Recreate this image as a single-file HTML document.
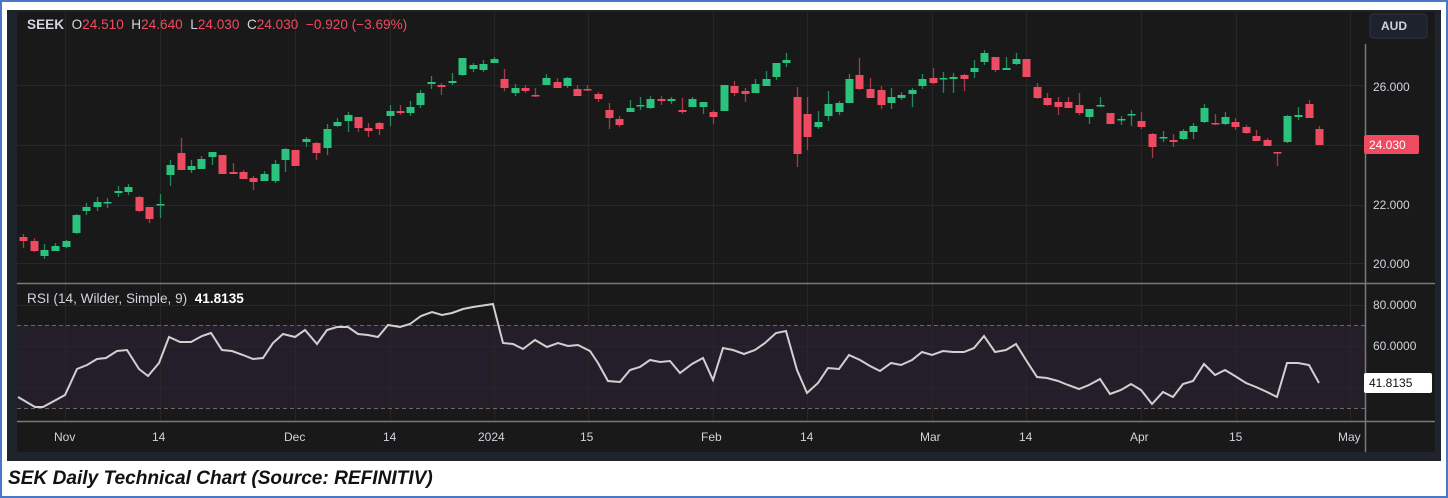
<!DOCTYPE html>
<html><head><meta charset="utf-8"><style>
*{margin:0;padding:0;box-sizing:border-box}
body{width:1448px;height:498px;background:#fff;position:relative;overflow:hidden;font-family:"Liberation Sans",sans-serif}
.border{position:absolute;left:0;top:0;width:1448px;height:498px;border:2px solid #4a78c8}
.frame{position:absolute;left:7px;top:10px;width:1434px;height:451px;background:#1f232c}
.t{position:absolute;font-size:12px;color:#d1d4dc;white-space:nowrap}
.h{font-size:13.6px}
.r{color:#f04a60}
.cap{position:absolute;left:8px;top:468px;font-size:19.1px;font-weight:bold;font-style:italic;color:#111;white-space:nowrap}
</style></head><body>
<div class="border"></div>
<div class="frame"></div>
<svg id="s" style="position:absolute;left:0;top:0" width="1448" height="498" xmlns="http://www.w3.org/2000/svg">
<rect x="17" y="12" width="1418" height="440" fill="#191919"/>
<rect x="17" y="325" width="1348" height="83" fill="#241e2b"/>
<g stroke="#272727" stroke-width="1">
<line x1="17" y1="85.5" x2="1365" y2="85.5"/><line x1="17" y1="145.5" x2="1365" y2="145.5"/>
<line x1="17" y1="205.5" x2="1365" y2="205.5"/><line x1="17" y1="263.5" x2="1365" y2="263.5"/>
<line x1="17" y1="305.5" x2="1365" y2="305.5"/><line x1="17" y1="346.5" x2="1365" y2="346.5"/><line x1="17" y1="388.5" x2="1365" y2="388.5"/>
<line x1="65.5" y1="12" x2="65.5" y2="421"/><line x1="160.5" y1="12" x2="160.5" y2="421"/><line x1="295.5" y1="12" x2="295.5" y2="421"/><line x1="390.5" y1="12" x2="390.5" y2="421"/><line x1="494.5" y1="12" x2="494.5" y2="421"/><line x1="588.5" y1="12" x2="588.5" y2="421"/><line x1="713.5" y1="12" x2="713.5" y2="421"/><line x1="807.5" y1="12" x2="807.5" y2="421"/><line x1="932.5" y1="12" x2="932.5" y2="421"/><line x1="1026.5" y1="12" x2="1026.5" y2="421"/><line x1="1141.5" y1="12" x2="1141.5" y2="421"/><line x1="1236.5" y1="12" x2="1236.5" y2="421"/><line x1="1350.5" y1="12" x2="1350.5" y2="421"/>
</g>
<g stroke="#6a6a6a" stroke-dasharray="4,3"><line x1="17" y1="325.5" x2="1365" y2="325.5"/><line x1="17" y1="408.5" x2="1365" y2="408.5"/></g>
<g stroke="#7a7a7a" stroke-width="1.5"><line x1="17" y1="283.5" x2="1435" y2="283.5"/><line x1="17" y1="421.5" x2="1435" y2="421.5"/><line x1="1365.5" y1="44" x2="1365.5" y2="452"/></g>
<g id="c"></g>
<polyline id="rsi" fill="none" stroke="#d0d0d0" stroke-width="2" points=""/>
<rect x="1370" y="14" width="57" height="24" rx="3" fill="#1e222d" stroke="#2d3240"/>
<rect x="1364" y="135" width="55" height="19" rx="2" fill="#f04a60"/>
<rect x="1364" y="373" width="68" height="20" rx="2" fill="#fff"/>
</svg>
<div class="t h" style="left:27px;top:17px"><b>SEEK</b>&nbsp; O<span class="r">24.510</span>&nbsp; H<span class="r">24.640</span>&nbsp; L<span class="r">24.030</span>&nbsp; C<span class="r">24.030</span>&nbsp; <span class="r">−0.920 (−3.69%)</span></div>
<div class="t" style="left:1381px;top:19px;font-weight:bold">AUD</div>
<div class="t" style="left:1373px;top:80px">26.000</div>
<div class="t" style="left:1369px;top:138px;color:#fff">24.030</div>
<div class="t" style="left:1373px;top:198px">22.000</div>
<div class="t" style="left:1373px;top:257px">20.000</div>
<div class="t" style="left:1373px;top:298px">80.0000</div>
<div class="t" style="left:1373px;top:339px">60.0000</div>
<div class="t" style="left:1369px;top:376px;color:#111">41.8135</div>
<div class="t h" style="left:27px;top:291px">RSI (14, Wilder, Simple, 9)&nbsp; <b style="color:#fff">41.8135</b></div>
<div class="t" style="left:54px;top:430px">Nov</div>
<div class="t" style="left:152px;top:430px">14</div>
<div class="t" style="left:284px;top:430px">Dec</div>
<div class="t" style="left:383px;top:430px">14</div>
<div class="t" style="left:478px;top:430px">2024</div>
<div class="t" style="left:580px;top:430px">15</div>
<div class="t" style="left:701px;top:430px">Feb</div>
<div class="t" style="left:800px;top:430px">14</div>
<div class="t" style="left:920px;top:430px">Mar</div>
<div class="t" style="left:1019px;top:430px">14</div>
<div class="t" style="left:1130px;top:430px">Apr</div>
<div class="t" style="left:1229px;top:430px">15</div>
<div class="t" style="left:1338px;top:430px">May</div>
<div class="cap">SEK Daily Technical Chart (Source: REFINITIV)</div>
<script>
var C=[[23,234,248,237,241,0],[34,238,252,241,251,0],[44,244,259,250,256,1],[55,243,251,246,251,1],[66,240,248,241,247,1],[76,214,234,215,233,1],[86,203,215,207,211,1],[97,197,211,202,207,1],[107,198,208,202,203,1],[118,186,197,191,193,1],[128,184,195,187,192,1],[139,196,212,197,211,0],[149,207,223,207,219,0],[160,194,218,204,205,1],[170,160,186,165,175,1],[181,138,170,153,170,0],[191,160,173,166,170,1],[201,156,169,159,169,1],[212,152,165,152,157,1],[222,155,174,155,174,0],[233,163,174,172,174,0],[243,170,179,172,179,0],[253,176,190,178,182,0],[264,171,181,174,181,1],[275,160,183,164,181,1],[285,148,172,149,160,1],[295,150,166,150,166,0],[306,137,147,139,142,1],[316,142,160,143,153,0],[327,124,155,129,148,1],[337,118,127,122,126,1],[348,112,132,115,121,1],[358,117,132,117,128,0],[368,123,137,128,131,0],[379,122,135,123,129,0],[390,105,126,111,116,1],[400,105,115,111,113,0],[410,101,116,107,113,1],[420,90,108,93,105,1],[431,76,89,82,84,1],[441,83,95,85,87,0],[452,73,85,81,83,1],[462,58,76,58,75,1],[473,63,72,65,69,1],[483,60,72,64,70,1],[494,57,63,59,63,1],[504,69,91,79,88,0],[515,84,96,88,93,1],[525,85,93,88,91,0],[535,88,97,95,96,0],[546,74,85,78,85,1],[557,78,88,82,88,0],[567,77,88,78,86,1],[577,85,96,89,96,0],[587,85,91,89,90,0],[598,92,102,94,99,0],[609,103,129,110,118,0],[619,116,127,119,125,0],[630,100,112,108,112,1],[640,97,110,105,106,1],[650,96,109,99,108,1],[661,96,105,99,101,0],[671,97,104,99,101,1],[682,98,114,110,112,0],[692,97,107,99,107,1],[703,102,114,102,107,1],[713,110,124,112,117,0],[724,85,111,85,111,1],[734,81,96,86,93,0],[745,88,102,91,94,0],[755,79,93,84,93,1],[766,71,86,79,86,1],[776,63,80,63,77,1],[786,53,67,60,63,1],[797,87,167,97,154,0],[807,97,150,114,137,0],[818,111,129,122,127,1],[828,91,121,104,116,1],[839,101,115,103,112,1],[849,74,103,79,103,1],[859,58,90,75,89,0],[870,78,98,89,98,0],[881,86,109,90,105,0],[891,88,109,97,103,1],[901,92,100,95,98,1],[912,88,107,90,94,1],[922,74,89,79,86,1],[933,68,84,78,83,0],[943,72,93,78,79,1],[953,73,93,77,79,1],[964,74,91,75,79,0],[974,60,78,68,72,1],[984,50,65,53,62,1],[995,57,72,57,70,0],[1006,57,70,68,70,1],[1016,53,65,59,64,1],[1026,59,77,59,77,0],[1037,83,99,87,98,0],[1047,93,106,98,105,0],[1058,97,115,102,107,0],[1068,97,108,102,108,0],[1079,93,115,105,113,0],[1089,109,124,109,117,1],[1100,97,107,105,106,1],[1110,113,124,113,124,0],[1121,116,125,119,120,1],[1131,110,126,114,115,1],[1141,112,129,121,127,0],[1152,133,158,134,147,0],[1163,131,142,137,138,1],[1173,134,147,140,142,0],[1183,129,140,131,139,1],[1193,123,139,126,132,1],[1204,104,123,108,122,1],[1215,114,125,123,124,0],[1225,112,125,117,124,1],[1235,118,130,122,127,0],[1246,125,134,127,133,0],[1256,130,141,136,141,0],[1267,138,146,140,146,0],[1277,152,166,152,153,0],[1287,115,143,116,142,1],[1298,107,120,115,117,1],[1309,100,118,104,118,0],[1319,126,145,129,145,0]];
var g=document.getElementById('c'),h='';
C.forEach(function(c){var col=c[5]?'#2bc27e':'#ee4b62';var wc=c[5]?'#22895b':'#a8394a';
h+='<line x1="'+(c[0]+.5)+'" y1="'+c[1]+'" x2="'+(c[0]+.5)+'" y2="'+c[2]+'" stroke="'+wc+'" stroke-width="1.3"/>';
h+='<rect x="'+(c[0]-3.5)+'" y="'+c[3]+'" width="8" height="'+Math.max(1.5,c[4]-c[3])+'" fill="'+col+'"/>';});
g.innerHTML=h;
document.getElementById('rsi').setAttribute('points',"18,397 35,407 43,407 65,395 77,369 87,365 97,359 106,358 117,351 127,350 139,369 148,376 159,363 169,337 180,342 191,342 202,336 211,333 222,350 232,351 243,355 253,359 263,358 273,343 283,334 295,337 305,330 317,344 327,330 337,327 348,327 358,334 368,335 378,337 388,325 400,327 410,324 421,316 432,312 442,315 452,313 463,309 473,307 493,304 503,343 513,344 523,349 535,340 547,347 558,343 568,346 578,345 590,351 598,363 608,381 620,382 630,370 640,367 650,360 660,362 670,361 680,373 692,364 703,358 713,380 723,348 733,350 744,354 755,350 765,343 776,333 786,331 797,370 807,393 818,383 828,368 839,369 849,355 860,360 870,366 880,371 891,363 901,365 912,360 922,352 932,355 943,351 953,352 964,352 974,348 984,336 995,352 1006,350 1016,344 1026,360 1037,377 1047,378 1058,381 1068,385 1079,389 1089,385 1100,379 1110,394 1121,390 1131,384 1141,390 1152,404 1163,392 1173,397 1183,384 1193,381 1204,364 1215,375 1225,370 1235,376 1246,383 1256,387 1267,392 1277,397 1287,363 1298,363 1309,365 1319,383");
</script>
</body></html>
